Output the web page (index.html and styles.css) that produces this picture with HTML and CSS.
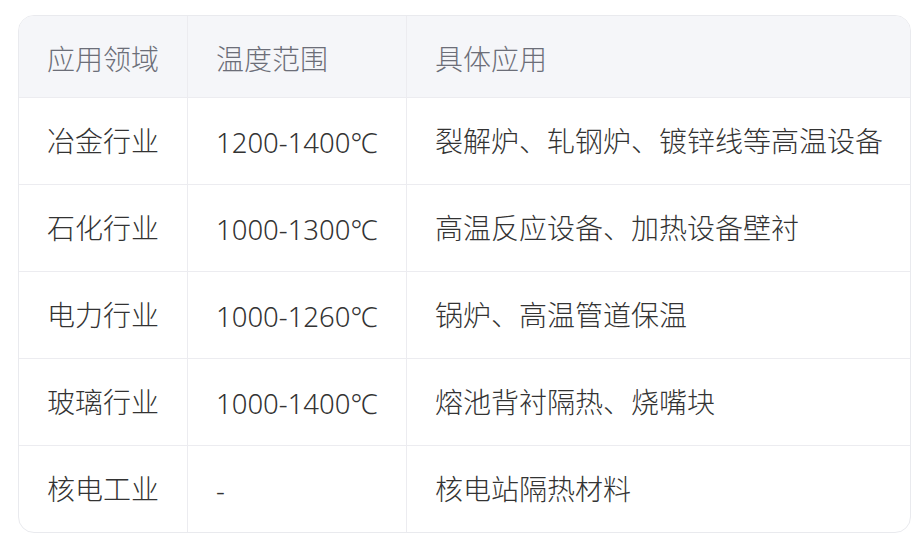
FILE: index.html
```html
<!DOCTYPE html>
<html lang="zh-CN">
<head>
<meta charset="utf-8">
<title>应用领域</title>
<link rel="stylesheet" href="styles.css">
</head>
<body>
<div class="table-wrap">
  <table class="app-table">
    <colgroup>
      <col class="c1">
      <col class="c2">
      <col class="c3">
    </colgroup>
    <thead>
      <tr>
        <th>应用领域</th>
        <th>温度范围</th>
        <th>具体应用</th>
      </tr>
    </thead>
    <tbody>
      <tr>
        <td>冶金行业</td>
        <td class="temp">1200-1400℃</td>
        <td>裂解炉、轧钢炉、镀锌线等高温设备</td>
      </tr>
      <tr>
        <td>石化行业</td>
        <td class="temp">1000-1300℃</td>
        <td>高温反应设备、加热设备壁衬</td>
      </tr>
      <tr>
        <td>电力行业</td>
        <td class="temp">1000-1260℃</td>
        <td>锅炉、高温管道保温</td>
      </tr>
      <tr>
        <td>玻璃行业</td>
        <td class="temp">1000-1400℃</td>
        <td>熔池背衬隔热、烧嘴块</td>
      </tr>
      <tr>
        <td>核电工业</td>
        <td class="temp">-</td>
        <td>核电站隔热材料</td>
      </tr>
    </tbody>
  </table>
</div>
</body>
</html>
```
FILE: styles.css
```css
html, body {
  margin: 0;
  padding: 0;
  background: #ffffff;
}

body {
  padding: 15px 4px 0 18px;
  font-family: "Noto Sans CJK SC", "Noto Sans", sans-serif;
}

.table-wrap {
  width: 893px;
  box-sizing: border-box;
  border: 1px solid #e9eaee;
  border-radius: 16px;
  overflow: hidden;
}

.app-table {
  width: 100%;
  border-collapse: separate;
  border-spacing: 0;
  table-layout: fixed;
  font-size: 28px;
  font-weight: 300;
  line-height: 1.2;
}

.c1 { width: 169px; }
.c2 { width: 219px; }
.c3 { width: auto; }

.app-table th,
.app-table td {
  box-sizing: border-box;
  padding: 0 28px;
  text-align: left;
  vertical-align: middle;
  border-right: 1px solid #ececf0;
  border-bottom: 1px solid #ececf0;
  white-space: nowrap;
}

.app-table th:last-child,
.app-table td:last-child {
  border-right: none;
}

.app-table tbody tr:last-child td {
  border-bottom: none;
}

.app-table th {
  height: 82px;
  padding-top: 4px;
  background: #f5f6f9;
  color: #6c6e78;
  font-weight: 300;
}

.app-table td {
  height: 87px;
  color: #333333;
}

.app-table td.temp {
  font-family: "Noto Sans", "Noto Sans CJK SC", sans-serif;
  font-size: 27.5px;
  font-weight: 350;
  padding-top: 2px;
}

.app-table tbody tr:last-child td {
  height: 86px;
}
```
